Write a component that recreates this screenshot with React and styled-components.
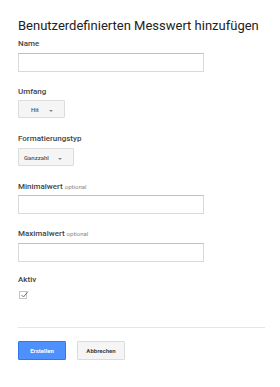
import React from "react";
import styled, { createGlobalStyle } from "styled-components";

const Global = createGlobalStyle`
  html, body { margin: 0; padding: 0; background: #fff; }
  body { font-family: Roboto, "Liberation Sans", Arial, sans-serif; color: #222; }
`;

const Page = styled.div`
  padding: 18px 15px 0 18px;
  width: 280px;
  box-sizing: border-box;
`;

const Title = styled.h1`
  margin: 0 0 5px;
  font-size: 13px;
  font-weight: 400;
  line-height: 16px;
  color: #222;
`;

const Field = styled.div`
  display: flex;
  flex-direction: column;
  align-items: flex-start;
  margin-bottom: ${(p) => p.$mb ?? 15}px;
`;

const Label = styled.div`
  font-size: 8px;
  font-weight: 500;
  line-height: 10px;
  color: #444;
  margin-bottom: ${(p) => p.$mb ?? 4}px;
`;

const Optional = styled.span`
  font-size: 6px;
  font-weight: 400;
  color: #888;
  margin-left: 2px;
`;

const Input = styled.div`
  width: 186px;
  height: 19px;
  box-sizing: border-box;
  border: 1px solid #d9d9d9;
  border-top-color: #c0c0c0;
  background: #fff;
`;

const Dropdown = styled.div`
  display: flex;
  align-items: center;
  justify-content: space-between;
  box-sizing: border-box;
  width: ${(p) => p.$w}px;
  height: 18px;
  padding: 0 ${(p) => p.$pr}px 0 ${(p) => p.$pl}px;
  background: #f5f5f5;
  border: 1px solid #dcdcdc;
  border-radius: 1px;
  font-size: 6px;
  font-weight: 500;
  color: #555;
`;

const Arrow = styled.span`
  width: 0;
  height: 0;
  border-left: 2px solid transparent;
  border-right: 2px solid transparent;
  border-top: 2px solid #888;
  margin-top: 3px;
`;

const Check = styled.div`
  width: 8px;
  height: 8px;
  box-sizing: border-box;
  border: 1px solid #c6c6c6;
  position: relative;
  margin-left: 1px;
  svg { position: absolute; left: 0; top: -2px; }
`;

const Divider = styled.hr`
  margin: 28px 0 13px;
  width: 247px;
  border: 0;
  border-top: 1px solid #e5e5e5;
`;

const Buttons = styled.div`
  display: flex;
  gap: 11px;
`;

const Button = styled.div`
  width: 48px;
  height: 19px;
  box-sizing: border-box;
  display: flex;
  align-items: center;
  justify-content: center;
  font-size: 6px;
  font-weight: 700;
  border-radius: 1px;
  background: ${(p) => (p.$primary ? "#4d90fe" : "#f5f5f5")};
  border: 1px solid ${(p) => (p.$primary ? "#3079ed" : "#dcdcdc")};
  color: ${(p) => (p.$primary ? "#fff" : "#444")};
`;

export default function App() {
  return (
    <>
      <Global />
      <Page>
        <Title>Benutzerdefinierten Messwert hinzufügen</Title>
        <Field>
          <Label>Name</Label>
          <Input />
        </Field>
        <Field $mb={16}>
          <Label $mb={3}>Umfang</Label>
          <Dropdown $w={47} $pl={12} $pr={11}>
            <span>Hit</span>
            <Arrow />
          </Dropdown>
        </Field>
        <Field $mb={16}>
          <Label>Formatierungstyp</Label>
          <Dropdown $w={56} $pl={5} $pr={11}>
            <span>Ganzzahl</span>
            <Arrow />
          </Dropdown>
        </Field>
        <Field>
          <Label $mb={3}>
            Minimalwert<Optional>optional</Optional>
          </Label>
          <Input />
        </Field>
        <Field $mb={13}>
          <Label>
            Maximalwert<Optional>optional</Optional>
          </Label>
          <Input />
        </Field>
        <Field $mb={0}>
          <Label $mb={6}>Aktiv</Label>
          <Check>
            <svg width="9" height="9" viewBox="0 0 9 9">
              <path d="M1.5 5 L3.5 7 L8 1.5" fill="none" stroke="#777" strokeWidth="1" />
            </svg>
          </Check>
        </Field>
        <Divider />
        <Buttons>
          <Button $primary>Erstellen</Button>
          <Button>Abbrechen</Button>
        </Buttons>
      </Page>
    </>
  );
}
